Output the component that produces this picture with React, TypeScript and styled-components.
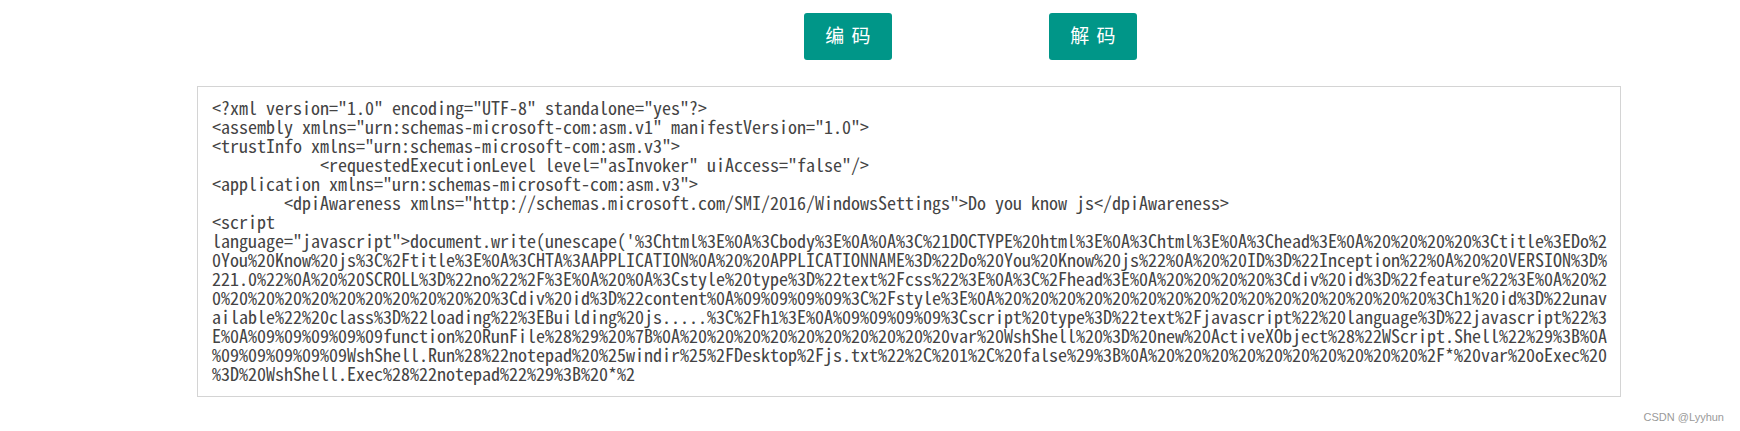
import React from "react";
import styled, { createGlobalStyle } from "styled-components";

const GlobalStyle = createGlobalStyle`
  html, body {
    margin: 0;
    padding: 0;
    background: #ffffff;
  }
  body {
    font-family: "Noto Sans CJK SC", "Noto Sans", sans-serif;
  }
`;

const Page = styled.div`
  position: relative;
  width: 1740px;
  height: 431px;
  box-sizing: border-box;
  padding-top: 13px;
  overflow: hidden;
`;

const Toolbar = styled.div`
  display: flex;
  gap: 157px;
  padding-left: 804px;
`;

const ActionButton = styled.button`
  box-sizing: border-box;
  width: 88px;
  height: 47px;
  padding: 0 0 4px;
  border: none;
  border-radius: 3px;
  background: #009688;
  color: #ffffff;
  font-family: "Noto Sans CJK SC", "Noto Sans", sans-serif;
  font-size: 19px;
  line-height: 43px;
  word-spacing: 3px;
  cursor: pointer;
`;

const Editor = styled.div`
  box-sizing: border-box;
  width: 1424px;
  height: 311px;
  margin: 26px 0 0 197px;
  padding: 11px 10px 0 14px;
  border: 1px solid #d4d4d4;
  background: #ffffff;
  font-family: "Noto Sans Mono CJK SC", "Noto Sans Mono CJK", "Liberation Mono", monospace;
  font-size: 18px;
  line-height: 19px;
  color: #444444;
  white-space: pre-wrap;
  line-break: anywhere;
  overflow: hidden;
`;

const Watermark = styled.span`
  position: absolute;
  right: 16px;
  top: 412px;
  font-family: "Liberation Sans", Arial, sans-serif;
  font-size: 11px;
  line-height: 11px;
  color: #9a9a9a;
`;

const sp = (n: number) => "%20".repeat(n);

const header = [
  '<?xml version="1.0" encoding="UTF-8" standalone="yes"?>',
  '<assembly xmlns="urn:schemas-microsoft-com:asm.v1" manifestVersion="1.0">',
  '<trustInfo xmlns="urn:schemas-microsoft-com:asm.v3">',
  '            <requestedExecutionLevel level="asInvoker" uiAccess="false"/>',
  '<application xmlns="urn:schemas-microsoft-com:asm.v3">',
  '        <dpiAwareness xmlns="http://schemas.microsoft.com/SMI/2016/WindowsSettings">Do you know js</dpiAwareness>',
  "<script",
].join("\n");

const script =
  "language=\"javascript\">document.write(unescape('" +
  "%3Chtml%3E%0A%3Cbody%3E%0A%0A%3C%21DOCTYPE%20html%3E%0A%3Chtml%3E%0A%3Chead%3E%0A%20%20%20%20%3Ctitle%3EDo%2" +
  "0You%20Know%20js%3C%2Ftitle%3E%0A%3CHTA%3AAPPLICATION%0A%20%20APPLICATIONNAME%3D%22Do%20You%20Know%20js%22%0A%20%20ID%3D%22Inception%22%0A%20%20VERSION%3D%" +
  "221.0%22%0A%20%20SCROLL%3D%22no%22%2F%3E%0A%20%0A%3Cstyle%20type%3D%22text%2Fcss%22%3E%0A%3C%2Fhead%3E%0A%20%20%20%20%3Cdiv%20id%3D%22feature%22%3E%0A%20%2" +
  "0" +
  sp(10) +
  "%3Cdiv%20id%3D%22content%0A%09%09%09%09%3C%2Fstyle%3E%0A" +
  sp(16) +
  "%3Ch1%20id%3D%22unav" +
  "ailable%22%20class%3D%22loading%22%3EBuilding%20js.....%3C%2Fh1%3E%0A%09%09%09%09%3Cscript%20type%3D%22text%2Fjavascript%22%20language%3D%22javascript%22%3" +
  "E%0A%09%09%09%09%09function%20RunFile%28%29%20%7B%0A" +
  sp(10) +
  "var%20WshShell%20%3D%20new%20ActiveXObject%28%22WScript.Shell%22%29%3B%0A" +
  "%09%09%09%09%09WshShell.Run%28%22notepad%20%25windir%25%2FDesktop%2Fjs.txt%22%2C%201%2C%20false%29%3B%0A" +
  sp(10) +
  "%2F*%20var%20oExec%20" +
  "%3D%20WshShell.Exec%28%22notepad%22%29%3B%20*%2";

export default function App() {
  return (
    <>
      <GlobalStyle />
      <Page>
        <Toolbar>
          <ActionButton type="button">编 码</ActionButton>
          <ActionButton type="button">解 码</ActionButton>
        </Toolbar>
        <Editor>{header + "\n" + script}</Editor>
        <Watermark>CSDN @Lyyhun</Watermark>
      </Page>
    </>
  );
}
